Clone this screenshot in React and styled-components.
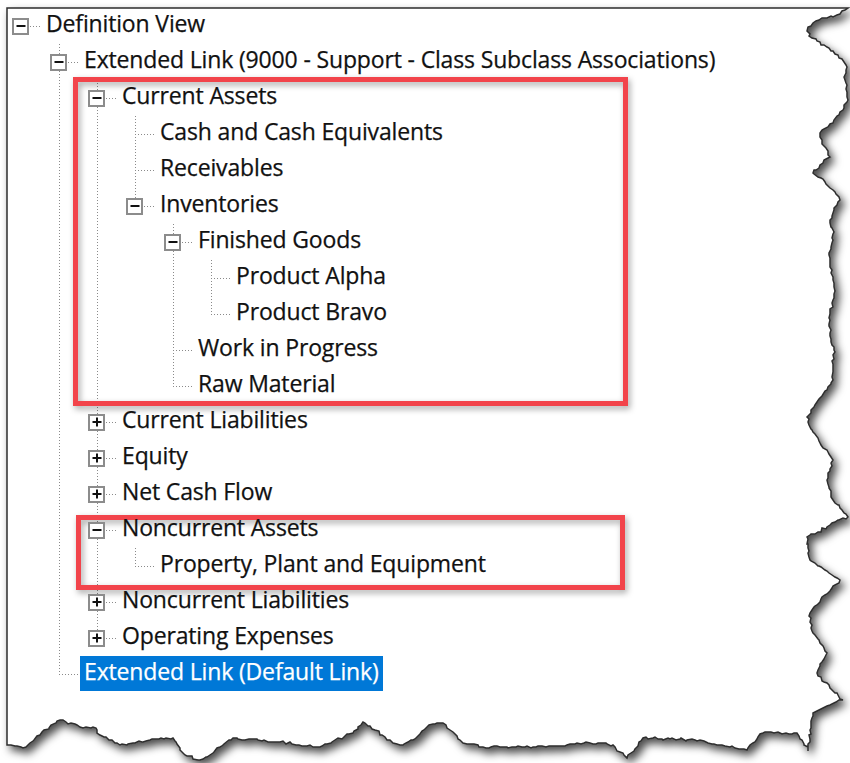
import React from "react";
import styled, { createGlobalStyle } from "styled-components";

// ********
// data
// ********

const definitionTree = {
	label: "Definition View",
	open: true,
	children: [
		{
			label: "Extended Link (9000 - Support - Class Subclass Associations)",
			open: true,
			children: [
				{
					label: "Current Assets",
					open: true,
					children: [
						{ label: "Cash and Cash Equivalents" },
						{ label: "Receivables" },
						{
							label: "Inventories",
							open: true,
							children: [
								{
									label: "Finished Goods",
									open: true,
									children: [{ label: "Product Alpha" }, { label: "Product Bravo" }],
								},
								{ label: "Work in Progress" },
								{ label: "Raw Material" },
							],
						},
					],
				},
				{ label: "Current Liabilities", children: [] },
				{ label: "Equity", children: [] },
				{ label: "Net Cash Flow", children: [] },
				{
					label: "Noncurrent Assets",
					open: true,
					children: [{ label: "Property, Plant and Equipment" }],
				},
				{ label: "Noncurrent Liabilities", children: [] },
				{ label: "Operating Expenses", children: [] },
			],
		},
		{ label: "Extended Link (Default Link)", selected: true },
	],
};

// torn right and bottom edge of the clipped window, clockwise from top right
const tornEdge = [
	[848, 8], [840, 14], [825, 18], [813, 23], [807, 31], [812, 38], [827, 47], [838, 55],
	[847, 67], [845, 80], [848, 100], [840, 112], [833, 123], [822, 130], [820, 137],
	[826, 148], [830, 157], [820, 165], [813, 173], [825, 182], [833, 190], [840, 200],
	[834, 210], [830, 220], [834, 232], [833, 240], [829, 255], [830, 267], [834, 285],
	[833, 300], [829, 318], [830, 333], [834, 350], [833, 367], [833, 380], [827, 390],
	[815, 405], [807, 417], [812, 430], [820, 443], [828, 452], [833, 460], [827, 480],
	[833, 500], [848, 517], [830, 525], [807, 537], [808, 548], [810, 560], [825, 570],
	[840, 580], [825, 595], [810, 613], [813, 633], [827, 653], [817, 673], [830, 688],
	[843, 700], [825, 707], [813, 713], [810, 730], [808, 751], [797, 733], [780, 733],
	[763, 733], [755, 742], [747, 750], [720, 745], [700, 740], [670, 739], [643, 738],
	[637, 747], [627, 758], [620, 752], [613, 745], [590, 743], [577, 743], [555, 746],
	[533, 747], [500, 747], [483, 747], [463, 743], [450, 730], [443, 723], [435, 724],
	[427, 727], [413, 740], [400, 745], [393, 743], [375, 730], [363, 722], [353, 733],
	[335, 740], [320, 747], [280, 742], [233, 738], [220, 747], [210, 755], [200, 760],
	[185, 755], [180, 750], [173, 738], [150, 740], [120, 745], [100, 735], [93, 727],
	[80, 727], [60, 720], [40, 735], [23, 748], [7, 745],
];

// roughen each segment into small pixel steps
function buildTornPath(points) {
	let seed = 7;
	const rand = () => {
		seed = (seed * 9301 + 49297) % 233280;
		return seed / 233280 - 0.5;
	};
	let d = "M7,8";
	for (let i = 0; i < points.length; i++) {
		const [bx, by] = points[i];
		if (i === 0) {
			d += ` L${bx},${by}`;
			continue;
		}
		const [ax, ay] = points[i - 1];
		const len = Math.hypot(bx - ax, by - ay);
		const steps = Math.max(1, Math.round(len / 3));
		for (let s = 1; s <= steps; s++) {
			const t = s / steps;
			let x = ax + (bx - ax) * t;
			let y = ay + (by - ay) * t;
			if (s < steps) {
				x += rand() * 2.4;
				y += rand() * 2.4;
			}
			d += ` L${Math.round(x)},${Math.round(y)}`;
		}
	}
	return d + " Z";
}

const paperPath = buildTornPath(tornEdge);

// ********
// component
// ********

function Expander({ open }) {
	return (
		<Box>
			<Bar />
			{!open && <Bar $vertical />}
		</Box>
	);
}

function TreeNode({ node }) {
	const hasChildren = Array.isArray(node.children);
	return (
		<Item>
			<Row>
				<Gutter>{hasChildren && <Expander open={node.open} />}</Gutter>
				<Label $selected={node.selected}>{node.label}</Label>
			</Row>
			{node.open && (
				<Branch>
					{node.children.map((child) => (
						<TreeNode key={child.label} node={child} />
					))}
				</Branch>
			)}
		</Item>
	);
}

export default function App() {
	return (
		<Page>
			<GlobalStyle />
			<Paper viewBox="0 0 850 763" width="850" height="763">
				<defs>
					<filter id="paper-shadow" x="-5%" y="-5%" width="115%" height="115%">
						<feDropShadow dx="4" dy="5" stdDeviation="4" floodColor="#000" floodOpacity="0.7" />
					</filter>
				</defs>
				<path d={paperPath} fill="#fff" stroke="#2e2e2e" strokeWidth="1.5" filter="url(#paper-shadow)" />
			</Paper>

			<Tree>
				<Root>
					<TreeNode node={definitionTree} />
				</Root>
			</Tree>

			<Callout $left={73} $top={77} $width={555} $height={329} />
			<Callout $left={76} $top={515} $width={549} $height={75} />
		</Page>
	);
}

// ********
// styles
// ********

const GlobalStyle = createGlobalStyle`
	html, body {
		margin: 0;
		background: #fff;
	}
	body {
		font-family: "Open Sans", "Noto Sans", sans-serif;
	}
`;

const Page = styled.div`
	position: relative;
	width: 850px;
	height: 763px;
	overflow: hidden;
	background: #fff;
`;

const Paper = styled.svg`
	position: absolute;
	left: 0;
	top: 0;
	display: block;
`;

const Tree = styled.div`
	position: relative;
	padding: 8px 0 0 7px;
`;

const Root = styled.ul`
	list-style: none;
	margin: 0;
	padding: 0;
`;

const Branch = styled.ul`
	list-style: none;
	margin: 0;
	padding: 0 0 0 38px;

	& > li::before {
		content: "";
		position: absolute;
		left: 14px;
		top: 0;
		bottom: 0;
		width: 1px;
		background: repeating-linear-gradient(to bottom, #8a8a8a 0 1px, transparent 1px 3px);
	}
	& > li:last-child::before {
		bottom: auto;
		height: 18px;
	}
`;

const Item = styled.li`
	position: relative;
`;

const Row = styled.div`
	position: relative;
	z-index: 1;
	display: flex;
	align-items: flex-start;
	height: 36px;
`;

const Gutter = styled.div`
	position: relative;
	flex: 0 0 35px;
	height: 36px;
	display: flex;
	align-items: center;
	padding-left: 6px;
	box-sizing: border-box;

	&::before {
		content: "";
		position: absolute;
		left: 14px;
		right: 0;
		top: 18px;
		height: 1px;
		background: repeating-linear-gradient(to right, #8a8a8a 0 1px, transparent 1px 3px);
	}
`;

const Box = styled.span`
	position: relative;
	box-sizing: border-box;
	width: 17px;
	height: 17px;
	margin-left: -1px;
	border: 2px solid #8c8c8c;
	background: #fff;
`;

const Bar = styled.span`
	position: absolute;
	left: 50%;
	top: 50%;
	width: ${(props) => (props.$vertical ? "2px" : "9px")};
	height: ${(props) => (props.$vertical ? "9px" : "2px")};
	transform: translate(-50%, -50%);
	background: #111;
`;

const Label = styled.span`
	box-sizing: border-box;
	height: 35px;
	padding: 0 4px 5px;
	line-height: 30px;
	font-size: 23px;
	letter-spacing: -0.15px;
	white-space: nowrap;
	-webkit-text-stroke: 0.25px currentColor;
	color: ${(props) => (props.$selected ? "#fff" : "#111")};
	background: ${(props) => (props.$selected ? "#0078d7" : "transparent")};
`;

const Callout = styled.div`
	position: absolute;
	left: ${(props) => props.$left}px;
	top: ${(props) => props.$top}px;
	width: ${(props) => props.$width}px;
	height: ${(props) => props.$height}px;
	box-sizing: border-box;
	border: 5px solid #f2444b;
	filter: drop-shadow(2px 3px 3px rgba(0, 0, 0, 0.35));
	pointer-events: none;
`;
